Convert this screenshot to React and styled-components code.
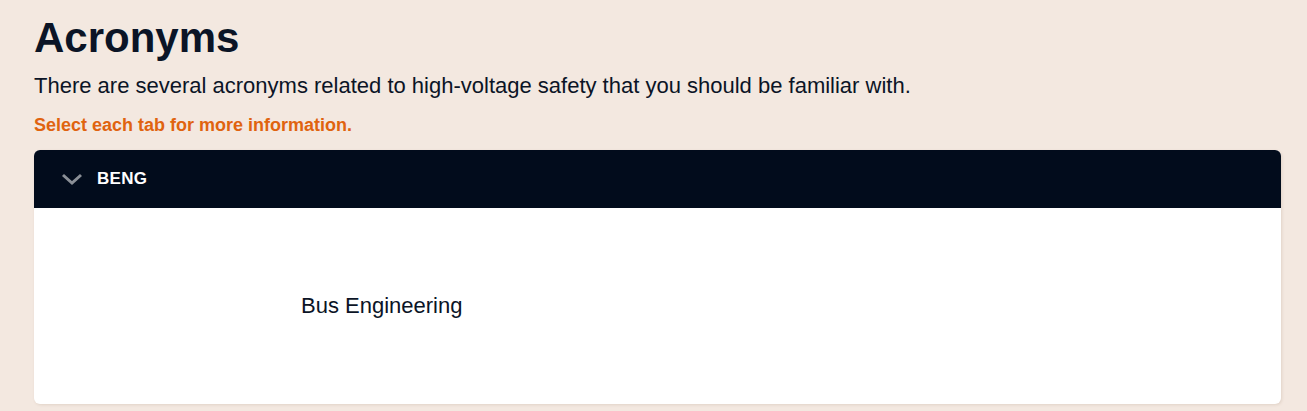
import React from 'react';
import styled, { createGlobalStyle } from 'styled-components';

const GlobalStyle = createGlobalStyle`
  body {
    margin: 0;
    background: #f3e8e0;
    font-family: Arial, "Liberation Sans", sans-serif;
    color: #0b1426;
  }
`;

const Page = styled.div`
  padding: 14px 26px 7px 34px;
`;

const Title = styled.h1`
  margin: 0;
  font-size: 42px;
  line-height: 48px;
  font-weight: 700;
  color: #0b1426;
`;

const Intro = styled.p`
  margin: 10px 0 0;
  font-size: 22px;
  line-height: 28px;
`;

const Hint = styled.p`
  margin: 14px 0 0;
  font-size: 18px;
  line-height: 22px;
  font-weight: 700;
  color: #e0630f;
`;

const Accordion = styled.div`
  margin-top: 14px;
  border-radius: 6px;
  background: #fff;
  overflow: hidden;
  box-shadow: 1px 1px 3px rgba(120, 90, 60, 0.15);
`;

const Header = styled.button`
  display: flex;
  align-items: center;
  gap: 14px;
  width: 100%;
  height: 58px;
  padding: 0 0 0 27px;
  border: 0;
  background: #020c1c;
  color: #fff;
  font-family: inherit;
  font-size: 17px;
  font-weight: 700;
  letter-spacing: 0.3px;
  cursor: pointer;
  text-align: left;
`;

const Chevron = styled.svg`
  width: 22px;
  height: 14px;
  flex: none;
`;

const Body = styled.div`
  display: flex;
  align-items: center;
  height: 196px;
  padding-left: 267px;
  font-size: 22px;
  color: #0b1426;
`;

export default function App() {
  return (
    <>
      <GlobalStyle />
      <Page>
        <Title>Acronyms</Title>
        <Intro>
          There are several acronyms related to high-voltage safety that you should be familiar with.
        </Intro>
        <Hint>Select each tab for more information.</Hint>
        <Accordion>
          <Header>
            <Chevron viewBox="0 0 22 14">
              <path d="M2 3 L11 11 L20 3" fill="none" stroke="#8a8f96" strokeWidth="3" />
            </Chevron>
            BENG
          </Header>
          <Body>Bus Engineering</Body>
        </Accordion>
      </Page>
    </>
  );
}
